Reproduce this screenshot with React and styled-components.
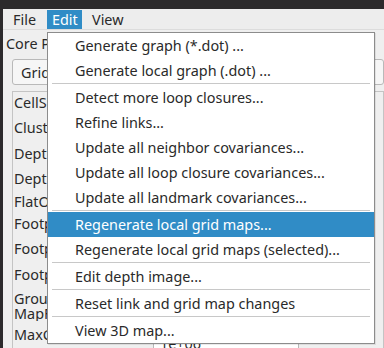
import React from "react";
import styled, { createGlobalStyle } from "styled-components";

const GlobalStyle = createGlobalStyle`
  html, body {
    margin: 0;
    padding: 0;
    background: #2c2a2c;
  }
  body {
    font-family: "Noto Sans", "Open Sans", sans-serif;
    font-size: 14.4px;
    color: #2a2a2a;
  }
`;

const Screen = styled.div`
  position: relative;
  width: 384px;
  height: 348px;
  overflow: hidden;
  background: #2c2a2c;
  padding: 9px 0 0 3px;
  box-sizing: border-box;
`;

const Frame = styled.div`
  display: flex;
  flex-direction: column;
  height: 100%;
  background: #efefef;
`;

const MenuBar = styled.div`
  display: flex;
  align-items: stretch;
  height: 22px;
  padding: 1px 0 0 3px;
  background: #ededed;
  border-bottom: 1px solid #dcdcdc;
`;

const MenuTitle = styled.div`
  display: flex;
  align-items: center;
  width: ${p => p.$w}px;
  padding-left: ${p => p.$pad}px;
  box-sizing: border-box;
  background: ${p => (p.$open ? "#308cc6" : "transparent")};
  color: ${p => (p.$open ? "#ffffff" : "#2a2a2a")};
`;

const Content = styled.div`
  flex: 1;
  display: flex;
  flex-direction: column;
  padding: 0 0 0 3px;
`;

const SectionLabel = styled.div`
  height: 26px;
  display: flex;
  align-items: center;
`;

const Combo = styled.div`
  height: 24px;
  margin: 3px 0 0 6px;
  padding: 0 8px;
  display: flex;
  align-items: center;
  background: #f6f6f6;
  border: 1px solid #b9b9b9;
  border-radius: 3px;
`;

const ParamList = styled.div`
  margin: 6px 0 0 6px;
  flex: 1;
  border: 1px solid #c4c4c4;
  border-bottom: none;
  background: #efefef;
`;

const ParamRow = styled.div`
  height: ${p => p.$h}px;
  display: flex;
  align-items: center;
  padding-left: 1px;
  line-height: 15px;
`;

const ParamName = styled.div`
  width: ${p => (p.$wrap ? 44 : 34)}px;
  overflow: hidden;
  white-space: ${p => (p.$wrap ? "normal" : "nowrap")};
  height: ${p => (p.$wrap ? 30 : 18)}px;
`;

const ValueBox = styled.div`
  margin-left: 105px;
  width: 146px;
  height: 24px;
  margin-top: 22px;
  border: 1px solid #b9b9b9;
  background: #ffffff;
  box-sizing: border-box;
  padding-left: 6px;
`;

const Dropdown = styled.div`
  position: absolute;
  left: 47px;
  top: 32px;
  width: 328px;
  box-sizing: border-box;
  background: #ffffff;
  border: 1px solid #8c8c8c;
  box-shadow: 1px 1px 0 rgba(0, 0, 0, 0.08);
`;

const Item = styled.div`
  height: 25px;
  display: flex;
  align-items: center;
  padding-left: 27px;
  white-space: nowrap;
  background: ${p => (p.$active ? "#308cc6" : "transparent")};
  color: ${p => (p.$active ? "#ffffff" : "#2a2a2a")};
`;

const Separator = styled.div`
  height: 1px;
  margin: 0 4px 1px 4px;
  background: #c8c8c8;
`;

const menu = [
  "Generate graph (*.dot) ...",
  "Generate local graph (.dot) ...",
  "-",
  "Detect more loop closures...",
  "Refine links...",
  "Update all neighbor covariances...",
  "Update all loop closure covariances...",
  "Update all landmark covariances...",
  "-",
  "Regenerate local grid maps...",
  "Regenerate local grid maps (selected)...",
  "-",
  "Edit depth image...",
  "-",
  "Reset link and grid map changes",
  "-",
  "View 3D map...",
];

const params = [
  { name: "CellSize", h: 24 },
  { name: "ClusterRadius", h: 26 },
  { name: "DepthDecimation", h: 26 },
  { name: "DepthRoiRatios", h: 24 },
  { name: "FlatObstaclesDetected", h: 21 },
  { name: "FootprintHeight", h: 24 },
  { name: "FootprintLength", h: 26 },
  { name: "FootprintWidth", h: 26 },
  { name: "Grou MapF", h: 34, wrap: true },
  { name: "MaxClusterSize", h: 26, value: "1e+06" },
];

export default function App() {
  return (
    <>
      <GlobalStyle />
      <Screen>
        <Frame>
          <MenuBar>
            <MenuTitle $w={41} $pad={7}>File</MenuTitle>
            <MenuTitle $w={35} $pad={5} $open>Edit</MenuTitle>
            <MenuTitle $w={50} $pad={10}>View</MenuTitle>
          </MenuBar>
          <Content>
            <SectionLabel>Core Parameters</SectionLabel>
            <Combo>Grid</Combo>
            <ParamList>
              {params.map(p => (
                <ParamRow key={p.name} $h={p.h}>
                  <ParamName $wrap={p.wrap}>{p.name}</ParamName>
                  {p.value && <ValueBox>{p.value}</ValueBox>}
                </ParamRow>
              ))}
            </ParamList>
          </Content>
        </Frame>
        <Dropdown>
          {menu.map((label, i) =>
            label === "-" ? (
              <Separator key={i} />
            ) : (
              <Item key={i} $active={label === "Regenerate local grid maps..."}>
                {label}
              </Item>
            )
          )}
        </Dropdown>
      </Screen>
    </>
  );
}
